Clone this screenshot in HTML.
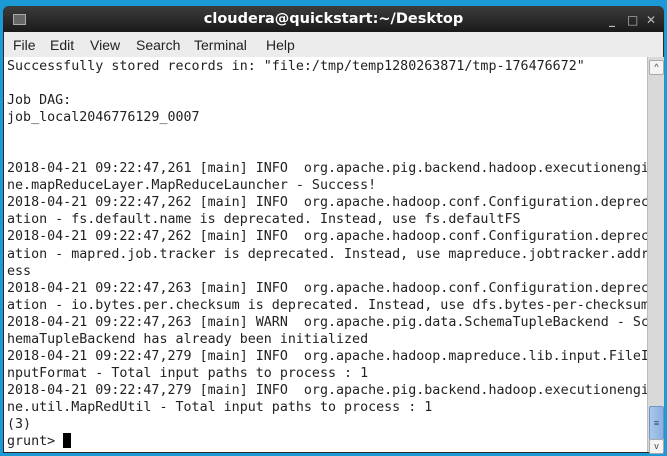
<!DOCTYPE html>
<html><head><style>
html,body{margin:0;padding:0;width:667px;height:456px;overflow:hidden;background:#1c9ad6;}
.win{position:absolute;left:3px;top:6px;width:661px;height:447px;background:#2a2a2a;border-radius:6px 6px 0 0;}
.title{position:absolute;left:0;top:0;width:661px;height:26px;background:linear-gradient(#3c3c3c,#1a1a1a);border-radius:6px 6px 0 0;color:#fff;font:bold 14.5px "DejaVu Sans","Liberation Sans",sans-serif;text-align:center;line-height:27px;}
.ico{position:absolute;left:10px;top:8px;width:11px;height:9px;background:#666;border:1px solid #aaa;}
.ctl{position:absolute;top:4px;color:#bbb;font:bold 12px "DejaVu Sans",sans-serif;line-height:20px;}
.menu{position:absolute;left:1px;top:26px;width:659px;height:25px;background:#ececec;border-bottom:1px solid #cfcfcf;font:14px "Liberation Sans","DejaVu Sans",sans-serif;color:#222;}
.menu span{position:absolute;top:5px;}
.term{position:absolute;left:1px;top:51px;width:643px;height:395px;background:#fff;}
pre{margin:0;position:absolute;left:3px;top:1px;font:13.33px "DejaVu Sans Mono",monospace;line-height:17.05px;color:#222;}
.sb{position:absolute;left:644px;top:51px;width:16px;height:395px;background:#d9d9d9;border-left:1px solid #bbb;}
.ar{position:absolute;left:1px;width:13px;height:13px;background:#f4f4f4;border:1px solid #aaa;border-radius:2px;font:9px sans-serif;text-align:center;line-height:13px;color:#444;}
.th{position:absolute;left:1px;top:349px;width:13px;height:32px;background:linear-gradient(90deg,#a9c8ec,#88b0e0);border:1px solid #6f94c4;border-radius:2px;color:#345;font:9px sans-serif;text-align:center;line-height:32px;}
.cur{display:inline-block;width:8px;height:15px;background:#000;vertical-align:-3px;}
</style></head><body>
<div class="win">
<div class="title"><div class="ico"></div>cloudera@quickstart:~/Desktop
<span class="ctl" style="left:606px">_</span><span class="ctl" style="left:624px;font-weight:normal">□</span><span class="ctl" style="left:643px">✕</span></div>
<div class="menu"><span style="left:9px">File</span><span style="left:46px">Edit</span><span style="left:86px">View</span><span style="left:132px">Search</span><span style="left:190px">Terminal</span><span style="left:262px">Help</span></div>
<div class="term"><pre>Successfully stored records in: "file:/tmp/temp1280263871/tmp-176476672"

Job DAG:
job_local2046776129_0007


2018-04-21 09:22:47,261 [main] INFO  org.apache.pig.backend.hadoop.executionengi
ne.mapReduceLayer.MapReduceLauncher - Success!
2018-04-21 09:22:47,262 [main] INFO  org.apache.hadoop.conf.Configuration.deprec
ation - fs.default.name is deprecated. Instead, use fs.defaultFS
2018-04-21 09:22:47,262 [main] INFO  org.apache.hadoop.conf.Configuration.deprec
ation - mapred.job.tracker is deprecated. Instead, use mapreduce.jobtracker.addr
ess
2018-04-21 09:22:47,263 [main] INFO  org.apache.hadoop.conf.Configuration.deprec
ation - io.bytes.per.checksum is deprecated. Instead, use dfs.bytes-per-checksum
2018-04-21 09:22:47,263 [main] WARN  org.apache.pig.data.SchemaTupleBackend - Sc
hemaTupleBackend has already been initialized
2018-04-21 09:22:47,279 [main] INFO  org.apache.hadoop.mapreduce.lib.input.FileI
nputFormat - Total input paths to process : 1
2018-04-21 09:22:47,279 [main] INFO  org.apache.pig.backend.hadoop.executionengi
ne.util.MapRedUtil - Total input paths to process : 1
(3)
grunt> <span class="cur"></span></pre></div>
<div class="sb"><div class="ar" style="top:3px">^</div><div class="th">≡</div><div class="ar" style="top:382px">v</div></div>
</div>
</body></html>
